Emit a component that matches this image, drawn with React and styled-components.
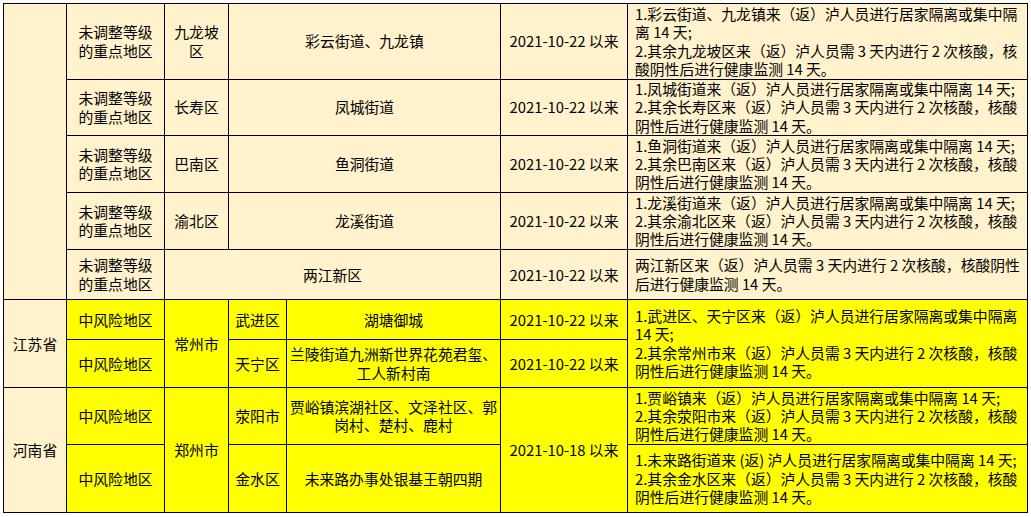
import React from 'react';
import styled, { createGlobalStyle } from 'styled-components';

const Global = createGlobalStyle`
  html, body {
    margin: 0;
    padding: 0;
    background: #fff;
  }
  body {
    font-family: "Noto Sans CJK SC", "Microsoft YaHei", sans-serif;
  }
`

const Page = styled.div`
  padding: 3px 0 0 3px;
`

const Table = styled.table`
  border-collapse: collapse;
  table-layout: fixed;
  width: 1024px;
  font-size: 14.8px;
  line-height: 18.4px;
  color: #000;
`

const Row = styled.tr`
  height: ${props => props.h}px;
`

const Cell = styled.td`
  border: 1px solid #000;
  padding: 0;
  background: ${props => (props.hot ? '#ffff00' : '#fff2cc')};
  text-align: ${props => (props.left ? 'left' : 'center')};
  vertical-align: middle;
  white-space: nowrap;
  overflow: hidden;
`

const Note = styled(Cell)`
  padding-left: 7px;
`

const cols = [63, 98, 64, 58, 214, 127, 400];

const Lines = ({ children }) =>
  children.split('\n').map((l, i) => (
    <React.Fragment key={i}>
      {i > 0 && <br />}
      {l}
    </React.Fragment>
  ));

const LEVEL = '未调整等级\n的重点地区';
const MID = '中风险地区';

const cq = [
  {
    h: 76,
    district: '九龙坡\n区',
    street: '彩云街道、九龙镇',
    note: '1.彩云街道、九龙镇来（返）泸人员进行居家隔离或集中隔\n离 14 天;\n2.其余九龙坡区来（返）泸人员需 3 天内进行 2 次核酸，核\n酸阴性后进行健康监测 14 天。',
  },
  {
    h: 56,
    district: '长寿区',
    street: '凤城街道',
    note: '1.凤城街道来（返）泸人员进行居家隔离或集中隔离 14 天;\n2.其余长寿区来（返）泸人员需 3 天内进行 2 次核酸，核酸\n阴性后进行健康监测 14 天。',
  },
  {
    h: 57,
    district: '巴南区',
    street: '鱼洞街道',
    note: '1.鱼洞街道来（返）泸人员进行居家隔离或集中隔离 14 天;\n2.其余巴南区来（返）泸人员需 3 天内进行 2 次核酸，核酸\n阴性后进行健康监测 14 天。',
  },
  {
    h: 57,
    district: '渝北区',
    street: '龙溪街道',
    note: '1.龙溪街道来（返）泸人员进行居家隔离或集中隔离 14 天;\n2.其余渝北区来（返）泸人员需 3 天内进行 2 次核酸，核酸\n阴性后进行健康监测 14 天。',
  },
];

export default function App() {
  return (
    <Page>
      <Global />
      <Table>
        <colgroup>
          {cols.map((w, i) => (
            <col key={i} style={{ width: w }} />
          ))}
        </colgroup>
        <tbody>
          {cq.map((r, i) => (
            <Row h={r.h} key={r.district}>
              {i === 0 && <Cell rowSpan={5} />}
              <Cell><Lines>{LEVEL}</Lines></Cell>
              <Cell><Lines>{r.district}</Lines></Cell>
              <Cell colSpan={2}>{r.street}</Cell>
              <Cell>2021-10-22 以来</Cell>
              <Note left><Lines>{r.note}</Lines></Note>
            </Row>
          ))}
          <Row h={50}>
            <Cell><Lines>{LEVEL}</Lines></Cell>
            <Cell colSpan={3}>两江新区</Cell>
            <Cell>2021-10-22 以来</Cell>
            <Note left>
              <Lines>{'两江新区来（返）泸人员需 3 天内进行 2 次核酸，核酸阴性\n后进行健康监测 14 天。'}</Lines>
            </Note>
          </Row>

          <Row h={40}>
            <Cell rowSpan={2}>江苏省</Cell>
            <Cell hot>{MID}</Cell>
            <Cell hot rowSpan={2}>常州市</Cell>
            <Cell hot>武进区</Cell>
            <Cell hot>湖塘御城</Cell>
            <Cell hot>2021-10-22 以来</Cell>
            <Note hot left rowSpan={2}>
              <Lines>{'1.武进区、天宁区来（返）泸人员进行居家隔离或集中隔离\n14 天;\n2.其余常州市来（返）泸人员需 3 天内进行 2 次核酸，核酸\n阴性后进行健康监测 14 天。'}</Lines>
            </Note>
          </Row>
          <Row h={48}>
            <Cell hot>{MID}</Cell>
            <Cell hot>天宁区</Cell>
            <Cell hot><Lines>{'兰陵街道九洲新世界花苑君玺、\n工人新村南'}</Lines></Cell>
            <Cell hot>2021-10-22 以来</Cell>
          </Row>

          <Row h={57}>
            <Cell rowSpan={2}>河南省</Cell>
            <Cell hot>{MID}</Cell>
            <Cell hot rowSpan={2}>郑州市</Cell>
            <Cell hot>荥阳市</Cell>
            <Cell hot><Lines>{'贾峪镇滨湖社区、文泽社区、郭\n岗村、楚村、鹿村'}</Lines></Cell>
            <Cell hot rowSpan={2}>2021-10-18 以来</Cell>
            <Note hot left>
              <Lines>{'1.贾峪镇来（返）泸人员进行居家隔离或集中隔离 14 天;\n2.其余荥阳市来（返）泸人员需 3 天内进行 2 次核酸，核酸\n阴性后进行健康监测 14 天。'}</Lines>
            </Note>
          </Row>
          <Row h={68}>
            <Cell hot>{MID}</Cell>
            <Cell hot>金水区</Cell>
            <Cell hot>未来路办事处银基王朝四期</Cell>
            <Note hot left>
              <Lines>{'1.未来路街道来 (返) 泸人员进行居家隔离或集中隔离 14 天;\n2.其余金水区来（返）泸人员需 3 天内进行 2 次核酸，核酸\n阴性后进行健康监测 14 天。'}</Lines>
            </Note>
          </Row>
        </tbody>
      </Table>
    </Page>
  );
}
